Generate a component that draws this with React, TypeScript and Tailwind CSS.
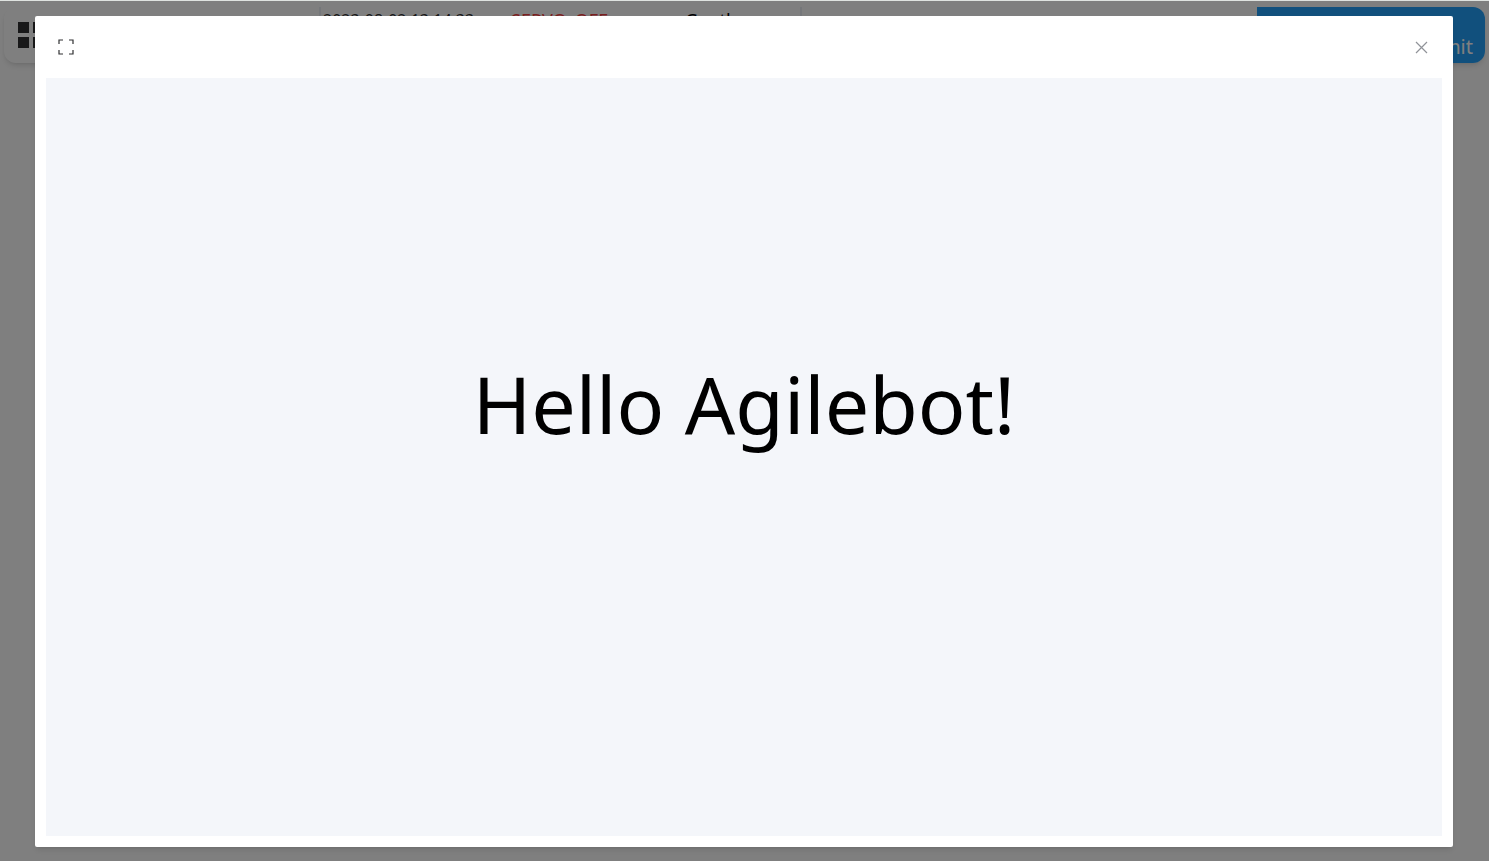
import React, { useState } from 'react';

interface StatusBarProps {
  time: string;
  servo: string;
  message: string;
}

const StatusBar: React.FC<StatusBarProps> = ({ time, servo, message }) => {
  return (
    <header className="mx-1 mt-[6px] h-14 flex items-stretch overflow-hidden rounded-xl bg-white text-lg leading-[26px] shadow-md">
      <button type="button" aria-label="Menu" className="flex-1 pl-[14px] text-[#303133]">
        <svg width="26" height="26" viewBox="0 0 26 26" fill="currentColor">
          <rect x="0" y="0" width="11" height="11" />
          <rect x="15" y="0" width="11" height="11" />
          <rect x="0" y="15" width="11" height="11" />
          <rect x="15" y="15" width="11" height="11" />
        </svg>
      </button>
      <div className="w-[483px] flex border-x-2 border-[#ebeef5] px-[2px]">
        <div className="w-[188px] text-base leading-[26px] text-[#303133]">{time}</div>
        <div className="w-[174px] text-[#f53f3f]">{servo}</div>
        <div>{message}</div>
      </div>
      <div className="w-[455px]" />
      <button type="button" className="w-[228px] bg-[#22a0fb] pr-3 pt-6 text-right text-xl leading-6 text-white">
        Permit
      </button>
    </header>
  );
};

const App: React.FC = () => {
  const [open, setOpen] = useState(true);
  const [full, setFull] = useState(false);

  return (
    <div className="min-h-screen border-t border-[#dfe3e0] bg-white font-['Noto_Sans',sans-serif] text-black">
      <StatusBar time="2023-08-02 13:14:33" servo="SERVO_OFF" message="Gentle" />

      {open && (
        <div className={`fixed inset-0 top-px bg-black/50 flex ${full ? '' : 'pl-[35px] pr-9 pt-[15px] pb-[14px]'}`}>
          <div role="dialog" aria-label="Preview" className="flex-1 flex flex-col rounded-xs bg-white px-[11px] pb-[11px] shadow-md">
            {/* Toolbar */}
            <div className="h-[62px] flex items-center justify-between px-3">
              <button type="button" aria-label="Fullscreen" className="text-[#303133]" onClick={() => setFull(!full)}>
                <svg width="16" height="16" viewBox="0 0 16 16" fill="none" stroke="currentColor" strokeWidth="1.2">
                  <path d="M1 5V1h4M11 1h4v4M15 11v4h-4M5 15H1v-4" />
                </svg>
              </button>
              <button type="button" aria-label="Close" className="mr-[2px] text-[#909399]" onClick={() => setOpen(false)}>
                <svg width="13" height="13" viewBox="0 0 13 13" fill="none" stroke="currentColor" strokeWidth="1.2">
                  <path d="M1 1l11 11M12 1L1 12" />
                </svg>
              </button>
            </div>

            <main className="flex-1 flex items-center justify-center bg-[#f4f6fa] pb-[106px]">
              <h1 className="text-[79px] leading-[108px]">Hello Agilebot!</h1>
            </main>
          </div>
        </div>
      )}
    </div>
  );
};

export default App;
